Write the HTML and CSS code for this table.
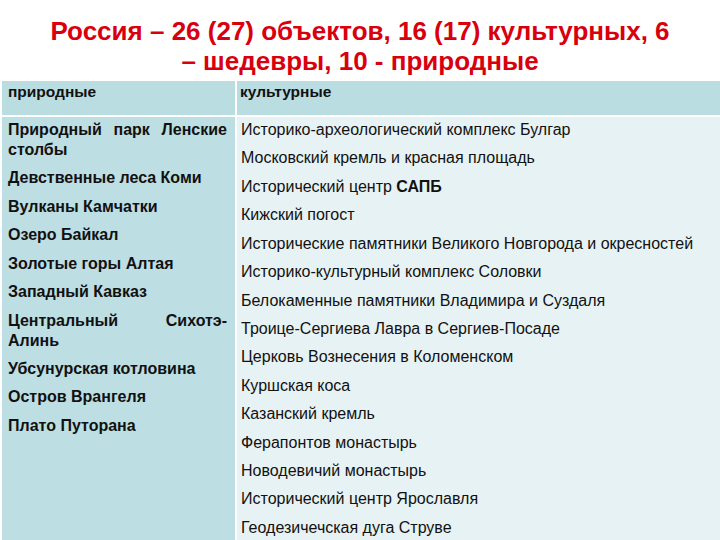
FILE: index.html
```html
<!DOCTYPE html>
<html lang="ru">
<head>
<meta charset="utf-8">
<link rel="stylesheet" href="styles.css">
</head>
<body>
<h1 class="title">Россия – 26 (27) объектов, 16 (17) культурных, 6<br>– шедевры, 10 - природные</h1>
<div class="table">
  <div class="head left-head">природные</div>
  <div class="head right-head">культурные</div>
  <div class="col left">
    <p>Природный парк Ленские столбы</p>
    <p>Девственные леса Коми</p>
    <p>Вулканы Камчатки</p>
    <p>Озеро Байкал</p>
    <p>Золотые горы Алтая</p>
    <p>Западный Кавказ</p>
    <p>Центральный Сихотэ-Алинь</p>
    <p>Убсунурская котловина</p>
    <p>Остров Врангеля</p>
    <p>Плато Путорана</p>
  </div>
  <div class="col right">
    <p>Историко-археологический комплекс Булгар</p>
    <p>Московский кремль и красная площадь</p>
    <p>Исторический центр <b>САПБ</b></p>
    <p>Кижский погост</p>
    <p>Исторические памятники Великого Новгорода и окресностей</p>
    <p>Историко-культурный комплекс Соловки</p>
    <p>Белокаменные памятники Владимира и Суздаля</p>
    <p>Троице-Сергиева Лавра в Сергиев-Посаде</p>
    <p>Церковь Вознесения в Коломенском</p>
    <p>Куршская коса</p>
    <p>Казанский кремль</p>
    <p>Ферапонтов монастырь</p>
    <p>Новодевичий монастырь</p>
    <p>Исторический центр Ярославля</p>
    <p>Геодезичечская дуга Струве</p>
  </div>
</div>
</body>
</html>
```

FILE: styles.css
```css
html, body {
  margin: 0;
  padding: 0;
  background: #ffffff;
  width: 720px;
  height: 540px;
  overflow: hidden;
}
body {
  font-family: "Liberation Sans", Arial, sans-serif;
  color: #111111;
}
.title {
  margin: 0;
  padding-top: 16px;
  height: 81px;
  box-sizing: border-box;
  text-align: center;
  color: #d9000e;
  font-size: 26px;
  font-weight: bold;
  line-height: 30px;
}
.table {
  margin-left: 2px;
  display: grid;
  grid-template-columns: 233px 1fr;
  grid-template-rows: 34px 1fr;
  column-gap: 2px;
  row-gap: 2px;
  height: 457px;
}
.head {
  background: #badde2;
  font-weight: bold;
  font-size: 15.5px;
  line-height: 20px;
  padding: 1px 6px 0;
}
.right-head {
  padding-left: 3px;
}
.col p {
  margin: 0 0 8.43px;
  line-height: 20px;
}
.left {
  background: #bddee3;
  padding: 3px 8px 0 6px;
  font-weight: bold;
  font-size: 16px;
  text-align: justify;
}
.right {
  background: #e7f2f4;
  padding: 3px 0 0 4px;
  font-size: 16px;
}
.right b {
  font-weight: bold;
}
```
